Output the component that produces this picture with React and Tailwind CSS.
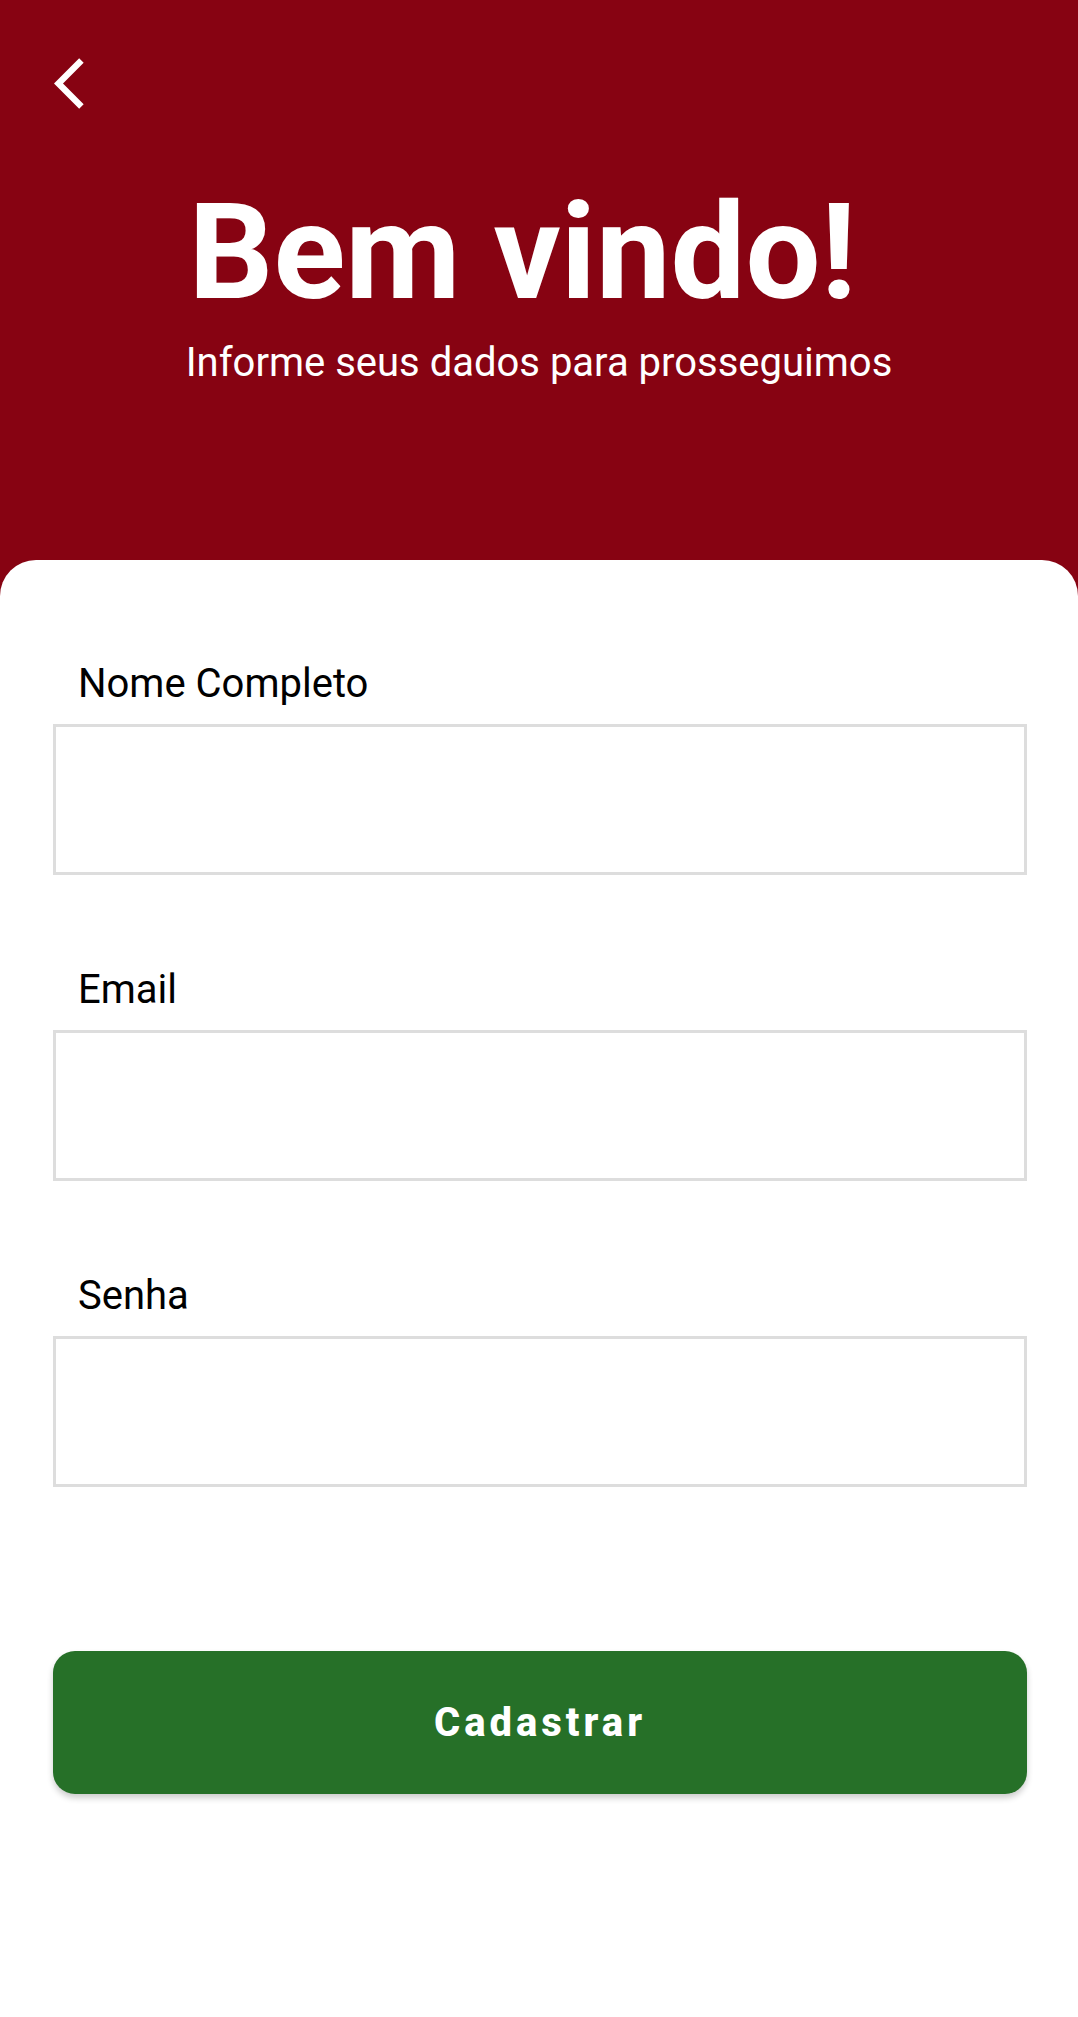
import React from 'react';

const Field = ({ label, type = 'text', last }) => (
  <div className={last ? '' : 'mb-[95px]'}>
    <label className="block pl-[25px] text-[40px] leading-none text-black">{label}</label>
    <input
      type={type}
      className="mt-[20px] block h-[151px] w-full border-[3px] border-[#dddddd] bg-white outline-none"
    />
  </div>
);

const App = () => {
  return (
    <div className="flex min-h-[2017px] flex-col bg-[#870312] font-['Roboto',sans-serif]">
      {/* Header */}
      <header className="h-[560px] shrink-0 pl-[54px] pt-[53px]">
        <button className="block h-[61px] w-[61px]" aria-label="Voltar">
          <svg viewBox="0 0 24 24" className="h-[61px] w-[61px]" fill="#ffffff">
            <path d="M11.67 3.87L9.9 2.1 0 12l9.9 9.9 1.77-1.77L3.54 12z" />
          </svg>
        </button>
        <div className="-ml-[54px] flex flex-col items-center">
          <h1 className="mt-[72px] pr-[33px] text-[133px] font-bold leading-none text-white">Bem vindo!</h1>
          <p className="mt-[24px] text-[40px] leading-none text-white">Informe seus dados para prosseguimos</p>
        </div>
      </header>

      {/* Form card */}
      <main className="flex-1 rounded-t-[36px] bg-white pl-[53px] pr-[51px] pt-[104px]">
        <Field label="Nome Completo" />
        <Field label="Email" type="email" />
        <Field label="Senha" type="password" last />

        <button className="mt-[164px] flex h-[143px] w-full items-center justify-center rounded-[22px] bg-[#267028] text-[40px] font-extrabold tracking-[4px] text-white shadow-[0_4px_6px_rgba(0,0,0,0.2)]">
          Cadastrar
        </button>
      </main>
    </div>
  );
};

export default App;
